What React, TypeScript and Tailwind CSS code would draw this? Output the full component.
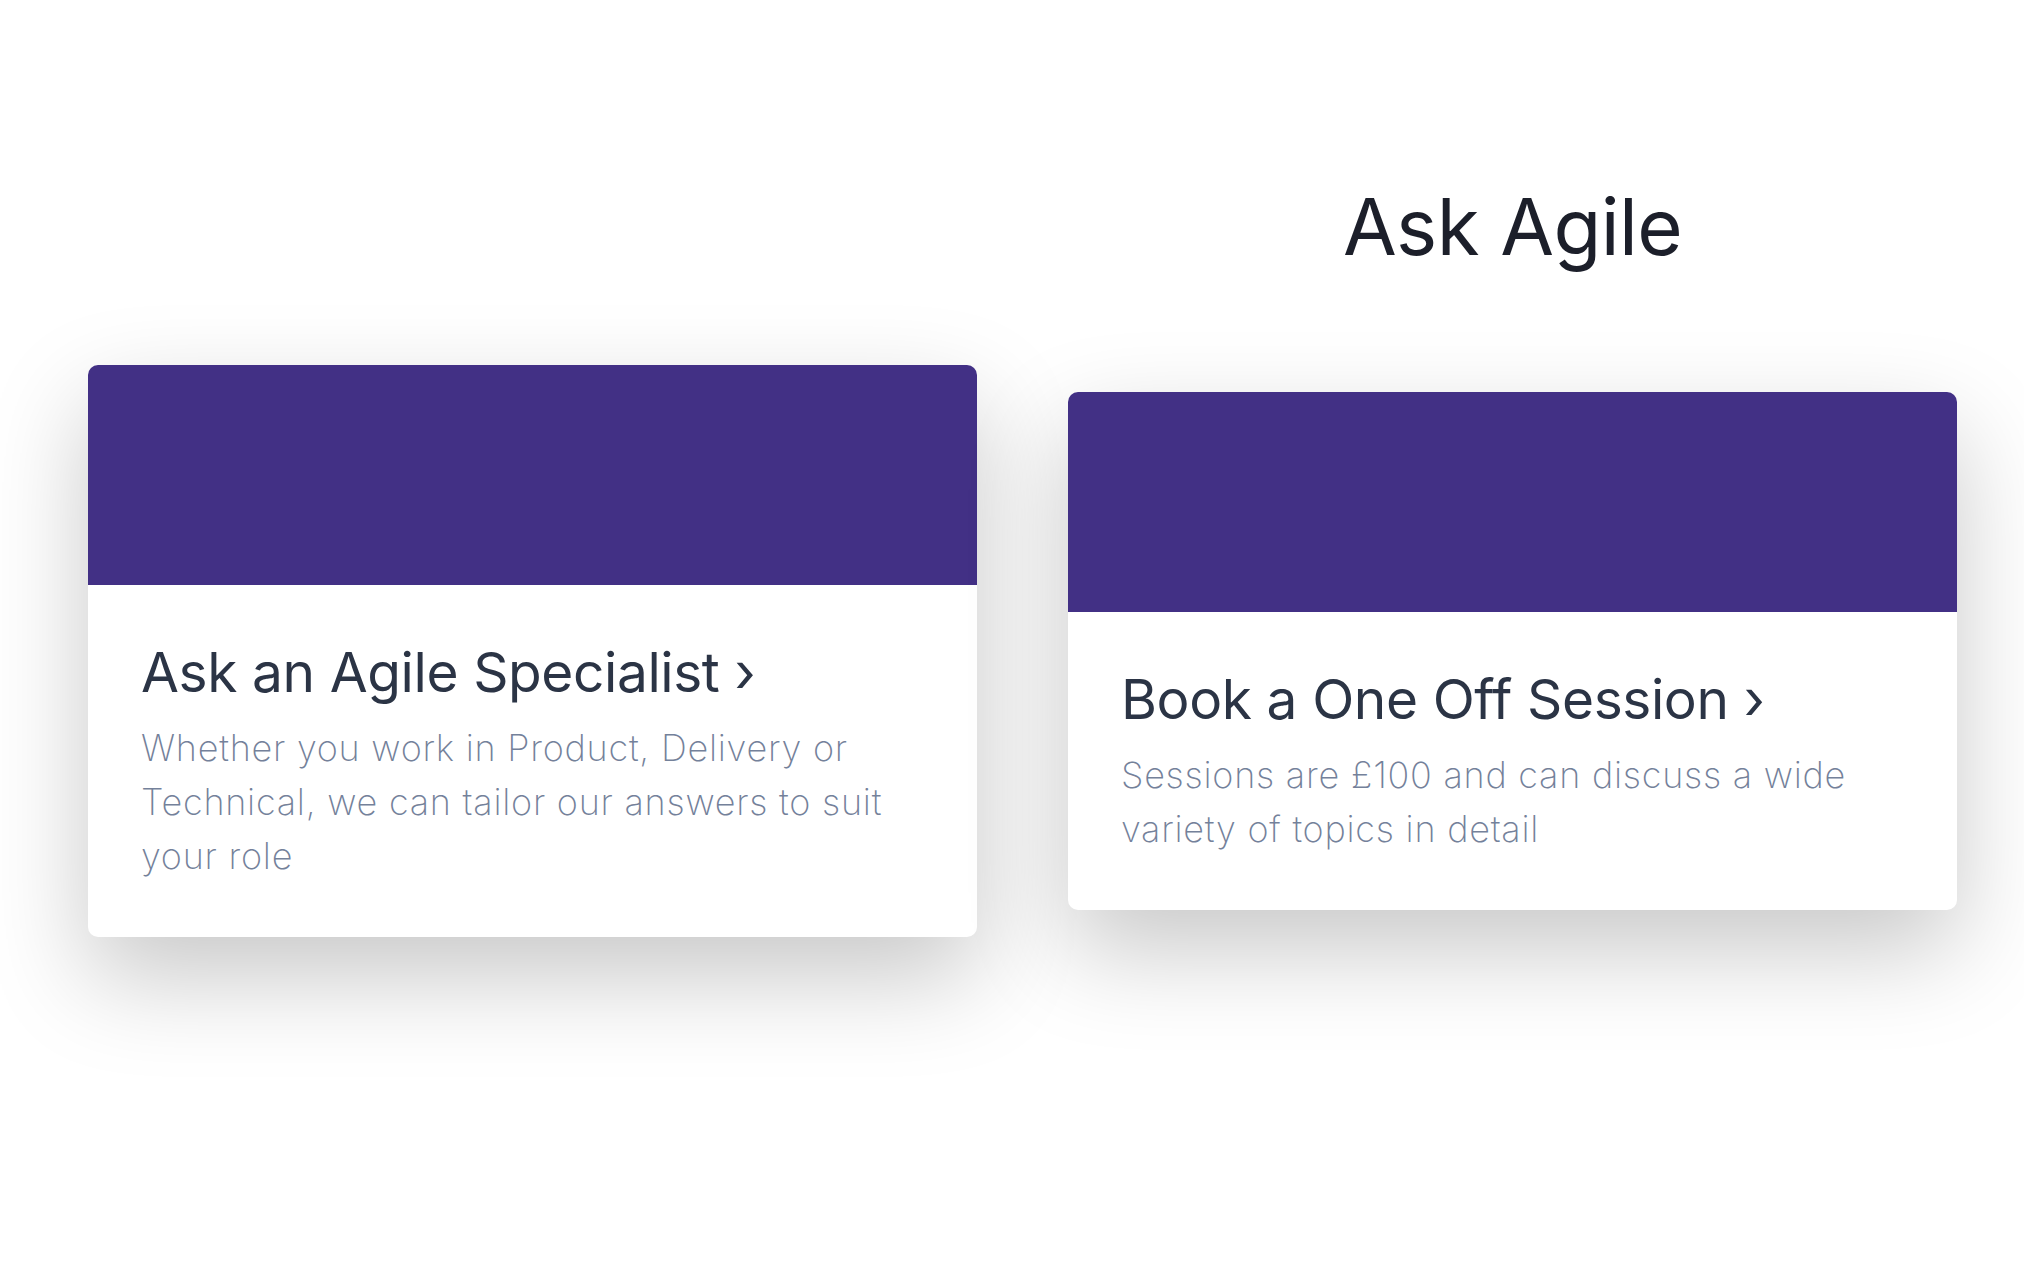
import React from "react";

function Card({ title, lines }: { title: string; lines: string[] }) {
  return (
    <div className="w-[889px] overflow-hidden rounded-[10px] bg-white shadow-[0_40px_100px_rgba(0,0,0,0.22)]">
      <div className="h-[220px] bg-[#423085]" />
      <div className="px-[53px] pt-[54px] pb-[54px]">
        <h3 className="text-[55px] leading-[66px] font-normal tracking-[-0.4px] text-[#2b3445] whitespace-nowrap">
          {title} <span>›</span>
        </h3>
        <p className="mt-[16px] text-[36px] leading-[54px] font-extralight tracking-[0.75px] text-[#74819a]">
          {lines.map((l, i) => (
            <React.Fragment key={i}>
              <span className="whitespace-nowrap">{l}</span>
              {i < lines.length - 1 && <br />}
            </React.Fragment>
          ))}
        </p>
      </div>
    </div>
  );
}

export default function App() {
  return (
    <div
      className="min-h-[1276px] w-full bg-white overflow-hidden"
      style={{ fontFamily: "Inter, 'Noto Sans', sans-serif" }}
    >
      <div className="flex items-start gap-[91px] pl-[88px] pr-[67px]">
        <div className="mt-[365px]">
          <Card
            title="Ask an Agile Specialist"
            lines={[
              "Whether you work in Product, Delivery or",
              "Technical, we can tailor our answers to suit",
              "your role",
            ]}
          />
        </div>
        <div className="flex flex-col pt-[188px]">
          <h1 className="text-center text-[78px] leading-[78px] font-normal tracking-[-0.6px] text-[#1c1f2a]">
            Ask Agile
          </h1>
          <div className="mt-[126px]">
            <Card
              title="Book a One Off Session"
              lines={[
                "Sessions are £100 and can discuss a wide",
                "variety of topics in detail",
              ]}
            />
          </div>
        </div>
      </div>
    </div>
  );
}
